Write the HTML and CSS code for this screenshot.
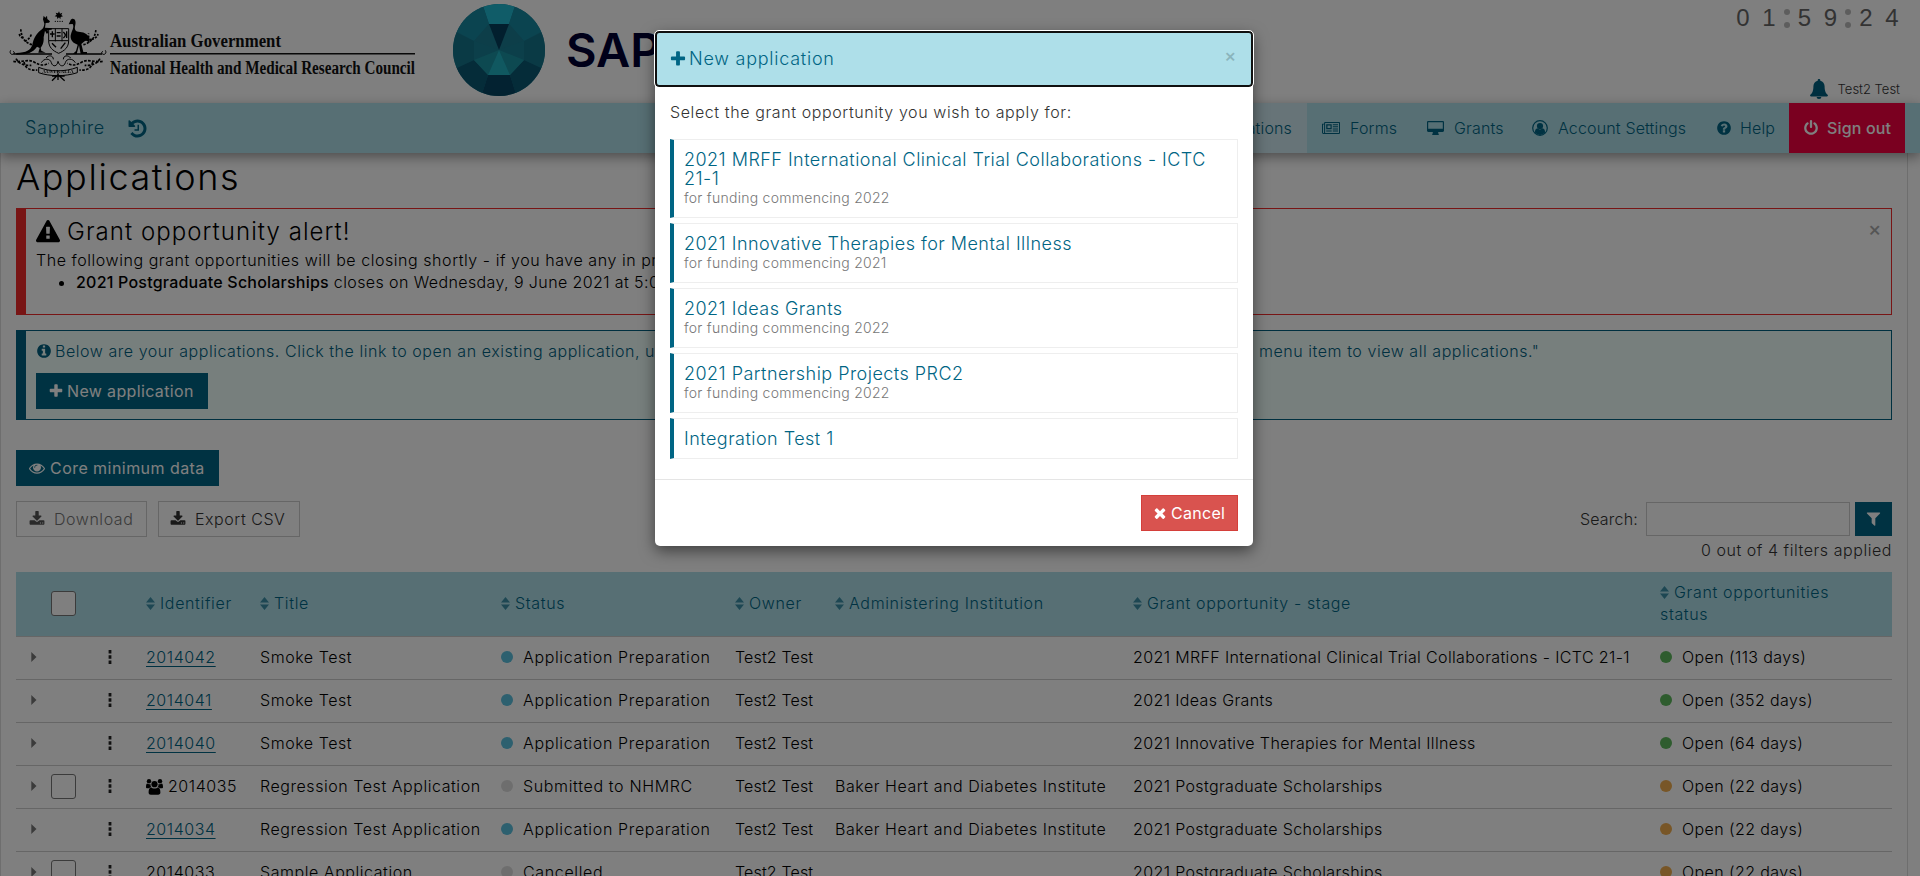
FILE: index.html
```html
<!DOCTYPE html>
<html lang="en">
<head>
<meta charset="utf-8">
<title>Sapphire - Applications</title>
<link rel="stylesheet" href="styles.css">
</head>
<body>
<svg class="defs" aria-hidden="true">
  <symbol id="plus" viewBox="0 0 1792 1792"><path d="M1600 736v192q0 40-28 68t-68 28h-416v416q0 40-28 68t-68 28h-192q-40 0-68-28t-28-68v-416h-416q-40 0-68-28t-28-68v-192q0-40 28-68t68-28h416v-416q0-40 28-68t68-28h192q40 0 68 28t28 68v416h416q40 0 68 28t28 68z"/></symbol>
  <symbol id="times" viewBox="0 0 1792 1792"><path d="M1490 1322q0 40-28 68l-136 136q-28 28-68 28t-68-28l-294-294-294 294q-28 28-68 28t-68-28l-136-136q-28-28-28-68t28-68l294-294-294-294q-28-28-28-68t28-68l136-136q28-28 68-28t68 28l294 294 294-294q28-28 68-28t68 28l136 136q28 28 28 68t-28 68l-294 294 294 294q28 28 28 68z"/></symbol>
  <symbol id="info" viewBox="0 0 1792 1792"><path d="M1152 1376v-160q0-14-9-23t-23-9h-96v-512q0-14-9-23t-23-9h-320q-14 0-23 9t-9 23v160q0 14 9 23t23 9h96v320h-96q-14 0-23 9t-9 23v160q0 14 9 23t23 9h448q14 0 23-9t9-23zm-128-896v-160q0-14-9-23t-23-9h-192q-14 0-23 9t-9 23v160q0 14 9 23t23 9h192q14 0 23-9t9-23zm640 416q0 209-103 385.5t-279.5 279.5-385.5 103-385.5-103-279.5-279.5-103-385.5 103-385.5 279.5-279.5 385.5-103 385.5 103 279.5 279.5 103 385.5z"/></symbol>
  <symbol id="question" viewBox="0 0 1792 1792"><path d="M1024 1376v-192q0-14-9-23t-23-9h-192q-14 0-23 9t-9 23v192q0 14 9 23t23 9h192q14 0 23-9t9-23zm256-672q0-88-55.500-163t-138.500-116-170-41q-243 0-371 213-15 24 8 42l132 100q7 6 19 6 16 0 25-12 53-68 86-92 34-24 86-24 48 0 85.500 26t37.500 59q0 38-20 61t-68 45q-63 28-115.500 86.500t-52.500 125.500v36q0 14 9 23t23 9h192q14 0 23-9t9-23q0-19 21.500-49.500t54.500-49.500q32-18 49-28.500t46-35 44.500-48 28-60.500 12.500-81zm384 192q0 209-103 385.500t-279.500 279.500-385.500 103-385.500-103-279.500-279.500-103-385.500 103-385.500 279.500-279.500 385.500-103 385.500 103 279.500 279.500 103 385.500z"/></symbol>
  <symbol id="warning" viewBox="0 0 1792 1792"><path d="M1024 1375v-190q0-14-9.500-23.500t-22.500-9.500h-192q-13 0-22.500 9.500t-9.500 23.500v190q0 14 9.500 23.500t22.500 9.500h192q13 0 22.500-9.500t9.500-23.500zm-2-374l18-459q0-12-10-19-13-11-24-11h-220q-11 0-24 11-10 7-10 21l17 457q0 10 10 16.500t24 6.500h185q14 0 23.500-6.500t10.500-16.500zm-14-934l768 1408q35 63-2 126-17 29-46.500 46t-63.500 17h-1536q-34 0-63.500-17t-46.500-46q-37-63-2-126l768-1408q17-31 47-49t65-18 65 18 47 49z"/></symbol>
  <symbol id="history" viewBox="0 0 1792 1792"><path d="M1664 896q0 156-61 298t-164 245-245 164-298 61q-172 0-327-72.500t-264-204.500q-7-10-6.500-22.500t8.500-20.500l137-138q10-9 25-9 16 2 23 12 73 95 179 147t225 52q104 0 198.500-40.500t163.500-109.500 109.500-163.500 40.500-198.500-40.500-198.500-109.500-163.500-163.500-109.500-198.500-40.500q-98 0-188 35.500t-160 101.500l137 138q31 30 14 69-17 40-59 40h-448q-26 0-45-19t-19-45v-448q0-42 40-59 39-17 69 14l130 129q107-101 244.500-156.500t284.500-55.500q156 0 298 61t245 164 164 245 61 298zm-640-288v448q0 14-9 23t-23 9h-320q-14 0-23-9t-9-23v-64q0-14 9-23t23-9h224v-352q0-14 9-23t23-9h64q14 0 23 9t9 23z"/></symbol>
  <symbol id="power" viewBox="0 0 1792 1792"><path d="M1664 896q0 156-61 298t-164 245-245 164-298 61-298-61-245-164-164-245-61-298q0-182 80.500-343t226.500-270q43-32 95.500-25t83.500 50q32 42 24.500 94.500t-49.500 84.500q-98 74-151.500 181t-53.500 228q0 104 40.500 198.500t109.500 163.500 163.500 109.500 198.500 40.500 198.500-40.500 163.500-109.500 109.500-163.500 40.500-198.500q0-121-53.500-228t-151.500-181q-42-32-49.500-84.500t24.500-94.500q31-43 84-50t95 25q146 109 226.500 270t80.500 343zm-640-768v640q0 52-38 90t-90 38-90-38-38-90v-640q0-52 38-90t90-38 90 38 38 90z"/></symbol>
  <symbol id="filter" viewBox="0 0 1792 1792"><path d="M1595 295q17 41-14 70l-493 493v742q0 42-39 59-13 5-25 5-27 0-45-19l-256-256q-19-19-19-45v-486l-493-493q-31-29-14-70 17-39 59-39h1280q42 0 59 39z"/></symbol>
  <symbol id="download" viewBox="0 0 1792 1792"><path d="M1344 1344q0-26-19-45t-45-19-45 19-19 45 19 45 45 19 45-19 19-45zm256 0q0-26-19-45t-45-19-45 19-19 45 19 45 45 19 45-19 19-45zm128-224v320q0 40-28 68t-68 28h-1472q-40 0-68-28t-28-68v-320q0-40 28-68t68-28h465l135 136q58 56 136 56t136-56l136-136h464q40 0 68 28t28 68zm-325-569q17 41-14 70l-448 448q-18 19-45 19t-45-19l-448-448q-31-29-14-70 17-39 59-39h256v-448q0-26 19-45t45-19h256q26 0 45 19t19 45v448h256q42 0 59 39z"/></symbol>
  <symbol id="eye" viewBox="0 0 1792 1792"><path d="M1664 960q-152-236-381-353 61 104 61 225 0 185-131.500 316.500t-316.500 131.500-316.500-131.500-131.500-316.500q0-121 61-225-229 117-381 353 133 205 333.500 326.500t434.500 121.500 434.500-121.500 333.500-326.500zm-720-384q0-20-14-34t-34-14q-125 0-214.500 89.500t-89.500 214.500q0 20 14 34t34 14 34-14 14-34q0-86 61-147t147-61q20 0 34-14t14-34zm848 384q0 34-20 69-140 230-376.500 368.500t-499.500 138.500-499.500-139-376.500-368q-20-35-20-69t20-69q140-229 376.500-368t499.500-139 499.500 139 376.500 368q20 35 20 69z"/></symbol>
  <symbol id="bell" viewBox="0 0 18 20"><path d="M9 0c.8 0 1.300.5 1.300 1.300v.5c2.700.6 4.300 2.900 4.300 5.500 0 5 1.300 7.300 3.400 8.700 0 .9-.6 1.500-1.400 1.500H1.400C.6 17.500 0 16.900 0 16c2.100-1.400 3.400-3.700 3.400-8.700 0-2.600 1.600-4.900 4.300-5.500v-.5C7.700.5 8.200 0 9 0zM6.600 18h4.800a2.400 2 0 0 1-4.800 0z"/></symbol>
  <symbol id="news" viewBox="0 0 18 12"><path fill-rule="evenodd" d="M3 0h14.200c.5 0 .8.300.8.800v10.300c0 .5-.4.900-.9.900H1.400C.6 12 0 11.400 0 10.600V1.700h2.100V.9C2.100.3 2.500 0 3 0zM1 2.600v7.800c0 .7 1.100.7 1.100 0V2.600zM3.100 1v10H17V1zM4.200 2.200h5.500v5H4.200zm1.300 1.200V6h3V3.400zM4.200 8.400h5.500v1.100H4.200zM10.800 2.200H16v1.100h-5.200zm0 2.100H16v1h-5.200zm0 2.100H16v1h-5.200zm0 2h5.200v1.100h-5.200z"/></symbol>
  <symbol id="desktop" viewBox="0 0 17 14"><path fill-rule="evenodd" d="M1.300 0h14.400c.7 0 1.300.5 1.300 1.200v8.600c0 .7-.6 1.200-1.300 1.200h-4.500v1.500c.5.200.7.500.7.800 0 .4-.2.700-.6.700H5.700c-.4 0-.6-.3-.6-.7 0-.3.200-.6.700-.8V11H1.300C.6 11 0 10.500 0 9.800V1.200C0 .5.600 0 1.300 0zM1.200 1.200v6.600h14.600V1.200z"/></symbol>
  <symbol id="account" viewBox="0 0 16 16"><circle cx="8" cy="8" r="7.300" fill="none" stroke="currentColor" stroke-width="1.200"/><circle cx="8" cy="6" r="3.100"/><path d="M5.500 8.300c-1.800.4-2.500 1.800-2.600 4.100A7 7 0 0 0 8 14.900a7 7 0 0 0 5.100-2.500c-.1-2.300-.8-3.700-2.600-4.100A3.600 3.600 0 0 1 8 9.400a3.600 3.600 0 0 1-2.500-1.100z"/></symbol>
  <symbol id="users" viewBox="0 0 17 16"><circle cx="3" cy="2.300" r="2.200"/><circle cx="14" cy="2.300" r="2.200"/><circle cx="8.500" cy="5.200" r="3.100"/><path d="M0 8.300C0 6 .4 4.600 1.300 4.600c.6.500 2.300.8 3.200.3C4.300 6.700 5 7.700 5.700 8.300c-1.200 0-1.900.3-2.500 1H1.300C.5 9.300 0 9 0 8.300zM17 8.300c0-2.300-.4-3.700-1.300-3.700-.6.500-2.300.8-3.200.3.200 1.800-.5 2.800-1.200 3.400 1.200 0 1.900.3 2.500 1h1.900c.8 0 1.300-.3 1.300-1zM5.200 8.500c1.400 1.300 5.200 1.300 6.600 0 1.900 0 2.600 2.200 2.600 5.100 0 1.400-.9 2.200-2.200 2.200H4.800c-1.300 0-2.200-.8-2.200-2.200 0-2.900.7-5.100 2.600-5.100z"/></symbol>
  <symbol id="sort" viewBox="0 0 9 13"><path d="M4.500 0 9 5.500H0zM0 7.500h9L4.500 13z"/></symbol>
  <symbol id="dots" viewBox="0 0 4 14"><path d="M.6 0h2.800v3.500H.6zM.6 5.200h2.800v3.500H.6zM.6 10.400h2.800v3.500H.6z"/></symbol>
  <symbol id="caret" viewBox="0 0 6 10"><path d="M.3 0 5.500 5 .3 10z"/></symbol>
</svg>

<header class="masthead">
  <svg class="crest" viewBox="0 0 324 240">
    <g fill="none" stroke="#000" stroke-width="3">
      <path d="M20 133c-5 8 2 15 9 11 4-3 2-8-2-7M304 133c5 8-2 15-9 11-4-3-2-8 2-7"/>
      <path stroke-width="4" d="M28 144h116M186 144h108"/>
      <path stroke-dasharray="7 4" stroke-width="5" d="M84 116C62 110 52 96 50 66M58 96c-8-2-12-7-12-14M62 106c10-4 18-12 20-22M238 116c22-6 36-20 38-48M262 100c12-2 18-8 20-16M262 104c-8-8-10-14-8-22"/>
      <path stroke-dasharray="8 4" stroke-width="5" d="M28 166c24 4 44-8 62 2s28 12 44 4M36 158c10 16 26 22 46 20M60 168c4 20 18 26 40 24M296 166c-24 4-44-8-62 2s-28 12-44 4M288 158c-10 16-26 22-46 20M266 168c-4 20-18 26-40 24"/>
      <path d="M104 184c34 14 80 14 116 0v16c-36 12-82 12-116 0zM112 170c8-14 26-14 30 0s18 12 20-4c4 16 18 18 22 4s22-14 30 0M126 156c8-10 22-8 22 4M200 156c-8-10-22-8-22 4"/>
      <path stroke-width="4" d="M162 206l-18 18M162 206l20 18M162 202v20M144 210h38"/>
      <path d="M134 68h60v36c0 20-12 30-30 38-18-8-30-18-30-38zM154 68v38M174 68v38M134 104h60"/>
      <path stroke-width="4" d="M138 84h14M145 76v18M158 80h12M158 90h12M178 78c8 8 8 12 0 18M188 76v20M144 112l12 12M184 110l-14 18"/>
    </g>
    <text x="162" y="200" font-family="Liberation Serif" font-size="15" font-weight="700" text-anchor="middle" textLength="94">AUSTRALIA</text>
    <path d="M165 16l3 7 7-3-3 7 5 4-7 2-1 7-4-6-5 5-1-7-7-1 6-5-3-6 7 2z"/>
    <circle cx="154" cy="46" r="2"/><circle cx="161" cy="46" r="2"/><circle cx="168" cy="46" r="2"/><circle cx="175" cy="46" r="2"/>
    <path d="M117 40l2-11 5 6 5-6 1 10 8 7-3 4-10 1-2 14 12 1 9 0-1 5-12 1 2 9-5 2-5-9-4 20c1 16-4 26-9 31l2 9 13 6H103l4-14-8-4c-12 18-28 23-62 24v-5c31-1 42-8 48-24 3-20 16-38 25-44 8-5 10-11 11-20z"/>
    <path d="M199 44c3-8 13-8 15 1 3 12-6 20 2 30 8 4 26 2 34 12 8 8 8 16 6 25-4-7-10-10-16-5l-8 7 6 24h11v6h-19l-5-26-7 26-11-1 9-8 5-19c-13-3-23-14-21-28 3-14 12-24 6-34l-12 1z"/>
  </svg>
  <svg class="council" viewBox="0 0 306 40" width="306" height="40">
    <text x="0" y="15.500" class="gov" textLength="171" lengthAdjust="spacingAndGlyphs">Australian Government</text>
    <rect x="0" y="22" width="305" height="1.500"/>
    <text x="0" y="43" class="gov" textLength="305" lengthAdjust="spacingAndGlyphs">National Health and Medical Research Council</text>
  </svg>
  <svg class="gem" viewBox="453 4 92 92">
    <clipPath id="round"><circle cx="499" cy="50" r="46"/></clipPath>
    <g clip-path="url(#round)">
      <path fill="#1a7f96" d="M453 4h92v92h-92z"/>
      <path fill="#20b8d0" d="M481 0h36l-8 24h-20z"/>
      <path fill="#1788a0" d="M481 0 489 24 474 41 450 28V0zM517 0 509 24 524 41 548 28V0z"/>
      <path fill="#15758b" d="M450 29 474 41V60L450 71zM548 29 524 41V60L548 71z"/>
      <path fill="#0a5873" d="M450 71 474 60 488 75 480 100H450zM548 71 524 60 510 75 518 100H548z"/>
      <path fill="#074562" d="M480 100 488 75H510L518 100z"/>
      <path fill="#1b7c92" d="M499 50 489 24 474 41zM499 50 509 24 524 41z"/>
      <path fill="#053e5c" d="M499 50 489 24H509z"/>
      <path fill="#187f94" d="M499 50 474 41V60zM499 50 524 41V60z"/>
      <path fill="#1b92a2" d="M499 50 474 60 488 75zM499 50 524 60 510 75z"/>
      <path fill="#20b0c0" d="M499 50 488 75H510z"/>
    </g>
  </svg>
  <span class="wordmark">SAPPHIRE</span>
  <div class="session">
    <div class="clock"><b>0</b><b>1</b><i></i><b>5</b><b>9</b><i></i><b>2</b><b>4</b></div>
    <div class="user"><svg class="bell"><use href="#bell"/></svg><span>Test2 Test</span></div>
  </div>
</header>

<nav class="nav">
  <div class="brand"><span>Sapphire</span><svg class="i20"><use href="#history"/></svg></div>
  <div class="menu">
    <a class="active">Applications</a>
    <a class="forms"><svg width="18" height="12"><use href="#news"/></svg>Forms</a>
    <a class="grants"><svg width="17" height="14"><use href="#desktop"/></svg>Grants</a>
    <a class="acct"><svg width="16" height="16"><use href="#account"/></svg>Account Settings</a>
    <a class="help"><svg width="16" height="16"><use href="#question"/></svg>Help</a>
    <a class="out"><svg width="16" height="16"><use href="#power"/></svg>Sign out</a>
  </div>
</nav>

<main class="page">
  <h1>Applications</h1>
  <section class="alert danger">
    <span class="x">×</span>
    <h2><svg width="24" height="24"><use href="#warning"/></svg>Grant opportunity alert!</h2>
    <p>The following grant opportunities will be closing shortly - if you have any in progress, please submit</p>
    <ul><li><b>2021 Postgraduate Scholarships</b> closes on Wednesday, 9 June 2021 at 5:00pm</li></ul>
  </section>
  <section class="alert note">
    <p><svg width="16" height="16"><use href="#info"/></svg><span class="lead">Below are your applications. Click the link to open an existing application, use the</span><span class="tail">menu item to view all applications."</span></p>
    <button class="btn dark"><svg width="16" height="16"><use href="#plus"/></svg>New application</button>
  </section>

  <button class="btn dark core"><svg width="16" height="16"><use href="#eye"/></svg>Core minimum data</button>
  <div class="tools">
    <button class="btn plain off"><svg width="16" height="16"><use href="#download"/></svg>Download</button>
    <button class="btn plain exp"><svg width="16" height="16"><use href="#download"/></svg>Export CSV</button>
    <label>Search:</label><input type="text"><button class="funnel"><svg width="17" height="17"><use href="#filter"/></svg></button>
  </div>
  <div class="applied">0 out of 4 filters applied</div>

  <div class="table">
    <div class="row head">
      <span></span><span><i class="box filled"></i></span><span></span>
      <span><svg><use href="#sort"/></svg>Identifier</span>
      <span><svg><use href="#sort"/></svg>Title</span>
      <span><svg><use href="#sort"/></svg>Status</span>
      <span><svg><use href="#sort"/></svg>Owner</span>
      <span><svg><use href="#sort"/></svg>Administering Institution</span>
      <span><svg><use href="#sort"/></svg>Grant opportunity - stage</span>
      <span><svg><use href="#sort"/></svg>Grant opportunities<br>status</span>
    </div>
    <div class="row"><svg class="caret"><use href="#caret"/></svg><span></span><svg class="dots"><use href="#dots"/></svg><span><a>2014042</a></span><span>Smoke Test</span><span class="state"><i class="dot blue"></i>Application Preparation</span><span class="owner">Test2 Test</span><span></span><span class="grant">2021 MRFF International Clinical Trial Collaborations - ICTC 21-1</span><span class="open"><i class="dot green"></i>Open (113 days)</span></div>
    <div class="row"><svg class="caret"><use href="#caret"/></svg><span></span><svg class="dots"><use href="#dots"/></svg><span><a>2014041</a></span><span>Smoke Test</span><span class="state"><i class="dot blue"></i>Application Preparation</span><span class="owner">Test2 Test</span><span></span><span class="grant">2021 Ideas Grants</span><span class="open"><i class="dot green"></i>Open (352 days)</span></div>
    <div class="row"><svg class="caret"><use href="#caret"/></svg><span></span><svg class="dots"><use href="#dots"/></svg><span><a>2014040</a></span><span>Smoke Test</span><span class="state"><i class="dot blue"></i>Application Preparation</span><span class="owner">Test2 Test</span><span></span><span class="grant">2021 Innovative Therapies for Mental Illness</span><span class="open"><i class="dot green"></i>Open (64 days)</span></div>
    <div class="row"><svg class="caret"><use href="#caret"/></svg><span><i class="box"></i></span><svg class="dots"><use href="#dots"/></svg><span><svg class="users"><use href="#users"/></svg>2014035</span><span>Regression Test Application</span><span class="state"><i class="dot grey"></i>Submitted to NHMRC</span><span class="owner">Test2 Test</span><span>Baker Heart and Diabetes Institute</span><span class="grant">2021 Postgraduate Scholarships</span><span class="open"><i class="dot orange"></i>Open (22 days)</span></div>
    <div class="row"><svg class="caret"><use href="#caret"/></svg><span></span><svg class="dots"><use href="#dots"/></svg><span><a>2014034</a></span><span>Regression Test Application</span><span class="state"><i class="dot blue"></i>Application Preparation</span><span class="owner">Test2 Test</span><span>Baker Heart and Diabetes Institute</span><span class="grant">2021 Postgraduate Scholarships</span><span class="open"><i class="dot orange"></i>Open (22 days)</span></div>
    <div class="row"><svg class="caret"><use href="#caret"/></svg><span><i class="box"></i></span><svg class="dots"><use href="#dots"/></svg><span>2014033</span><span>Sample Application</span><span class="state"><i class="dot grey"></i>Cancelled</span><span class="owner">Test2 Test</span><span></span><span class="grant">2021 Postgraduate Scholarships</span><span class="open"><i class="dot orange"></i>Open (22 days)</span></div>
  </div>
</main>

<div class="overlay">
  <div class="modal">
    <div class="modal-head"><svg width="18" height="18"><use href="#plus"/></svg><span>New application</span><span class="x">×</span></div>
    <div class="modal-body">
      <p>Select the grant opportunity you wish to apply for:</p>
      <div class="opt"><div>2021 MRFF International Clinical Trial Collaborations - ICTC<br>21-1</div><small>for funding commencing 2022</small></div>
      <div class="opt"><div>2021 Innovative Therapies for Mental Illness</div><small>for funding commencing 2021</small></div>
      <div class="opt"><div>2021 Ideas Grants</div><small>for funding commencing 2022</small></div>
      <div class="opt"><div>2021 Partnership Projects PRC2</div><small>for funding commencing 2022</small></div>
      <div class="opt"><div>Integration Test 1</div></div>
    </div>
    <div class="modal-foot"><button class="btn cancel"><svg width="16" height="16"><use href="#times"/></svg>Cancel</button></div>
  </div>
</div>
</body>
</html>
```
FILE: styles.css
```css
* { box-sizing: border-box; }
html, body { margin: 0; height: 876px; overflow: hidden; }
body { background: #fff; color: #000; font: 400 16px/22px Inter, "Open Sans", sans-serif; font-weight: 350; }
.defs { position: absolute; width: 0; height: 0; }
svg { fill: currentColor; flex: none; }
h1, h2, p, ul { margin: 0; font-weight: inherit; }
button { font: inherit; }

.masthead { height: 103px; display: flex; align-items: flex-start; }
.crest { width: 108px; height: 80px; margin: 6px -2px 0 4px; filter: blur(.3px); }
.council { margin-top: 31px; overflow: visible; fill: #111; }
.gov { font: 700 18px "Liberation Serif", serif; }
.gem { width: 92px; height: 92px; margin: 4px 0 0 37px; }
.wordmark { margin: 20px 0 0 21px; font-size: 47px; line-height: 60px; font-weight: 600; color: #000033; }
.session { margin-left: auto; padding-right: 20px; display: flex; flex-direction: column; align-items: flex-end; }
.clock { display: flex; margin: 4px -5px 0 0; height: 28px; font: 24px/27px "Liberation Sans", Arial, sans-serif; color: #666; }
.clock b { width: 26px; font-weight: 400; text-align: center; }
.clock i { width: 9.500px; display: flex; flex-direction: column; gap: 7px; padding-top: 5px; align-items: center; }
.clock i::before, .clock i::after { content: ""; width: 6px; height: 6px; border-radius: 50%; background: #bbb; }
.user { display: flex; align-items: center; gap: 10px; margin-top: 46px; font-size: 13px; color: #333; }
.bell { width: 18px; height: 20px; color: #006080; }

.nav { position: relative; height: 50px; background: #aedfe9; box-shadow: 0 4px 12px rgba(0,0,0,.4); display: flex; justify-content: space-between; color: #006584; }
.brand { display: flex; align-items: center; gap: 22px; padding-left: 25px; font-size: 18px; letter-spacing: .7px; }
.i20 { width: 21px; height: 21px; }
.menu { display: flex; margin-right: 15px; letter-spacing: .15px; }
.menu a { display: flex; align-items: center; gap: 10px; width: 100px; }
.menu .active { background: #cfe9f0; width: 140px; justify-content: flex-end; padding-right: 15px; }
.menu .forms { width: 105px; padding-left: 15px; }
.menu .grants { width: 104px; padding-left: 15px; }
.menu .acct { width: 200px; padding-left: 16px; }
.menu .help { width: 73px; padding-left: 0; }
.menu .help, .menu .out { gap: 8px; }
.menu .out { width: 116px; padding-left: 14px; background: #f40040; color: #fff; font-weight: 450; }

.page { margin: 0 12px 0 0; padding: 0 15px; border-left: 1px solid #ddd; border-right: 1px solid #ddd; height: 723px; white-space: nowrap; letter-spacing: .55px; }
h1 { font-size: 36px; line-height: 44px; padding-top: 2px; height: 55px; font-weight: 350; letter-spacing: 1.600px; }
.alert { border: 1px solid #e22; border-left-width: 10px; padding: 10px; position: relative; }
.danger { height: 107px; border-color: #f02a2a; }
.danger h2 { display: flex; align-items: center; gap: 7px; font-size: 24px; line-height: 26px; font-weight: 350; letter-spacing: 1.050px; }
.danger p { margin-top: 4px; }
ul { padding-left: 40px; letter-spacing: .4px; }
b { font-weight: 500; }
li b { letter-spacing: .22px; }
.danger > .x { position: absolute; right: 9px; top: 9px; font-size: 20px; color: #aaa; font-weight: 500; }
.note { margin-top: 15px; height: 90px; padding-top: 9px; background: #effffb; border-color: #006080; color: #006080; }
.note p { display: flex; align-items: center; gap: 3px; }
.lead { width: 1201px; }
.btn { display: flex; align-items: center; gap: 5px; height: 36px; padding: 0 12px 1px; border: 1px solid transparent; white-space: nowrap; }
.dark { background: #006584; color: #fff; font-weight: 400; letter-spacing: .45px; }
.note .btn { margin-top: 11px; width: 172px; gap: 3px; padding-left: 11px; letter-spacing: .35px; }
.core { margin-top: 30px; width: 203px; }
.tools { display: flex; align-items: center; margin-top: 15px; }
.plain { background: #fff; border-color: #ccc; color: #333; gap: 9px; letter-spacing: .55px; }
.off { width: 131px; color: #777; }
.off svg { color: #555; }
.exp { width: 142px; margin-left: 11px; padding-left: 11px; }
.tools label { margin-left: auto; color: #333; letter-spacing: .2px; padding-bottom: 1px; }
.tools input { width: 204px; height: 34px; margin: 0 5px 0 8px; border: 1px solid #ccc; background: #fff; }
.funnel { width: 37px; height: 34px; border: 0; padding: 0 0 2px; background: #006584; color: #fff; display: grid; place-items: center; }
.applied { text-align: right; margin: 2px 0 11px; line-height: 22px; color: #333; }

.row { display: grid; grid-template-columns: 35px 55px 40px 114px 241px 234px 100px 298px 527px 1fr; align-items: center; height: 43px; padding-bottom: 2px; border-bottom: 1px solid #ccc; }
.head { height: 65px; background: #aedfe9; color: #006584; letter-spacing: .65px; }
.head svg { width: 9px; height: 13px; margin-right: 5px; opacity: .65; vertical-align: -1px; }
.row a { color: #006584; text-decoration: underline; text-underline-offset: 3px; }
.state { letter-spacing: .65px; }
.owner { letter-spacing: .15px; }
.grant { letter-spacing: .37px; }
.open { letter-spacing: .4px; }
.box { display: block; width: 25px; height: 25px; border: 1px solid #767676; border-radius: 3px; background: #fff; }
.caret { width: 6px; height: 10px; margin-left: 15px; color: #777; }
.dots { width: 4px; height: 14px; margin-left: 2px; color: #222; }
.users { width: 17px; height: 16px; margin-right: 5px; vertical-align: -3px; }
.dot { display: inline-block; width: 12px; height: 12px; border-radius: 50%; margin-right: 10px; }
.blue { background: #5bc0de; }
.grey { background: #ddd; }
.green { background: #5cb85c; }
.orange { background: #f0ad4e; }

.overlay { position: absolute; inset: 0; background: rgba(0,0,0,.5); }
.modal { position: absolute; left: 655px; top: 31px; width: 598px; height: 515px; background: #fff; border-radius: 5px; box-shadow: 0 5px 15px rgba(0,0,0,.5); color: #333; letter-spacing: .6px; }
.modal-head { height: 56px; margin-bottom: -1px; display: flex; align-items: center; gap: 2px; padding: 0 14px 1px 12px; background: #aedfe9; border: 2px solid #101010; border-radius: 4px; outline: 1px solid #fff; color: #006584; font-size: 18px; letter-spacing: .75px; }
.modal-head .x { margin: -5px 0 0 auto; font-size: 18px; font-weight: 500; color: #8ab4bc; }
.modal-body { height: 394px; padding: 15px 15px 0; border-bottom: 1px solid #e5e5e5; white-space: nowrap; }
.modal-body p { margin-bottom: 16px; }
.opt { border: 1px solid #eee; border-left: 4px solid #006584; padding: 10px; margin-bottom: 5px; color: #006584; font-size: 18px; line-height: 19px; letter-spacing: .47px; }
small { display: block; font-size: 14px; color: #777; letter-spacing: .27px; }
.modal-foot { display: flex; justify-content: flex-end; padding: 15px; }
.cancel { background: #d9534f; border-color: #d43f3a; color: #fff; width: 97px; gap: 3px; padding: 0 10px 1px; font-weight: 400; letter-spacing: .3px; }
```
